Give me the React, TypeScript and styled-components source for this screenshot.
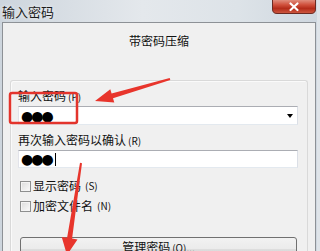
import React from "react";
import styled, { createGlobalStyle } from "styled-components";

const GlobalStyle = createGlobalStyle`
    html, body {
        margin: 0;
        padding: 0;
        background: #dfe4e9;
    }
    body {
        font-family: "Liberation Sans", "Noto Sans CJK SC", sans-serif;
        font-size: 12px;
        color: #000;
    }
`;

const Window = styled.div`
    position: relative;
    width: 317px;
    height: 251px;
    overflow: hidden;
    background: linear-gradient(90deg, #cdd5dd 0%, #e4e8ec 45%, #dde3e8 75%, #cfd7df 100%);
`;

const TitleBar = styled.div`
    height: 22px;
    display: flex;
    justify-content: space-between;
    align-items: flex-start;
`;

const Title = styled.div`
    margin: 4px 0 0 2px;
    font-family: "Noto Sans CJK SC", sans-serif;
    font-size: 13px;
    line-height: 15px;
    color: #1b1b1b;
    text-shadow: 0 0 4px rgba(255, 255, 255, 0.9);
`;

const CloseSvg = styled.svg`
    flex: 0 0 auto;
    display: block;
    margin-right: 1px;
`;

const CloseButton = () => (
    <CloseSvg width="44" height="14" viewBox="0 0 44 14">
        <defs>
            <linearGradient id="closeRed" x1="0" y1="0" x2="0" y2="1">
                <stop offset="0" stopColor="#e3998a" />
                <stop offset="0.4" stopColor="#d0503c" />
                <stop offset="0.65" stopColor="#b42c1a" />
                <stop offset="1" stopColor="#cf5a42" />
            </linearGradient>
        </defs>
        <path d="M0.5 -1 V9 Q0.5 13.5 5 13.5 H39 Q43.5 13.5 43.5 9 V-1 Z" fill="url(#closeRed)" stroke="#6b2a22" />
        <path d="M18.5 3.5 L25.5 10 M25.5 3.5 L18.5 10" stroke="#ffffff" strokeWidth="2.2" strokeLinecap="round" />
    </CloseSvg>
);

const Body = styled.div`
    margin: 0 1px 0 2px;
    height: 229px;
    border: 1px solid #8d9196;
    border-bottom: none;
    background: #f0f0f0;
    padding: 0 7px 0 7px;
`;

const Heading = styled.div`
    margin-top: 10px;
    height: 16px;
    text-align: center;
    font-family: "Noto Sans CJK SC", sans-serif;
    font-size: 12px;
    line-height: 16px;
    color: #111;
`;

const GroupBox = styled.div`
    margin-top: 31px;
    height: 200px;
    border: 1px solid #d9d9d9;
    border-bottom: none;
    border-radius: 3px 3px 0 0;
    box-shadow: inset 1px 1px 0 #fafafa;
    padding: 8px 9px 0 7px;
    display: flex;
    flex-direction: column;
`;

const FieldLabel = styled.div<{ $gap?: number }>`
    margin-top: ${({ $gap }) => $gap ?? 0}px;
    font-family: "Noto Sans CJK SC", sans-serif;
    font-size: 12px;
    line-height: 14px;
    color: #111;
`;

const Field = styled.div<{ $height: number }>`
    margin-top: 2px;
    height: ${({ $height }) => $height}px;
    box-sizing: border-box;
    background: #fff;
    border: 1px solid #abadb3;
    border-color: #abadb3 #dbdfe6 #e3e9ef #e2e3ea;
    display: flex;
    align-items: center;
    padding: 0 2px;
`;

const Dots = styled.span`
    font-family: "DejaVu Sans", sans-serif;
    font-size: 14px;
    letter-spacing: -2px;
    line-height: 14px;
    color: #000;
`;

const Caret = styled.span`
    display: inline-block;
    width: 1px;
    height: 13px;
    margin-left: 3px;
    background: #000;
`;

const DropArrow = styled.span`
    margin-left: auto;
    margin-right: 2px;
    width: 0;
    height: 0;
    border-left: 3.5px solid transparent;
    border-right: 3.5px solid transparent;
    border-top: 4px solid #000;
`;

const CheckRow = styled.label<{ $gap: number }>`
    margin: ${({ $gap }) => $gap}px 0 0 2px;
    display: flex;
    align-items: center;
    gap: 2px;
    font-family: "Noto Sans CJK SC", sans-serif;
    font-size: 12px;
    line-height: 12px;
    color: #111;
`;

const Box = styled.span`
    width: 11px;
    height: 11px;
    box-sizing: border-box;
    border: 1px solid #8e8f8f;
    background: linear-gradient(135deg, #dcdcdc, #fbfbfb);
    box-shadow: inset 0 0 0 1px #f4f4f4;
`;

const Hint = styled.span`
    font-size: 10px;
    margin-left: 2px;
`;

const Button = styled.div`
    margin: 25px 1px 0 2px;
    height: 24px;
    box-sizing: border-box;
    border: 1px solid #707070;
    border-radius: 3px;
    background: linear-gradient(#f2f2f2 0%, #ebebeb 48%, #dddddd 52%, #cfcfcf 100%);
    text-align: center;
    font-family: "Noto Sans CJK SC", sans-serif;
    font-size: 12px;
    line-height: 18px;
    color: #111;
`;

const Overlay = styled.svg`
    position: absolute;
    left: 0;
    top: 0;
    pointer-events: none;
`;

const Annotations = () => (
    <Overlay width="317" height="251" viewBox="0 0 317 251">
        <rect x="10" y="93" width="67" height="30" rx="2" fill="none" stroke="#e3342c" strokeWidth="2.5" />
        <polygon
            points="169.7,78 111.6,93.5 110.3,89.2 95,101 114.3,102.6 113,98.3 170.3,80"
            fill="#e8352c"
        />
        <polygon
            points="80,162.8 67.1,237.8 61.7,237 67,255 77.5,239.4 72.1,238.6 82,163.2"
            fill="#e8352c"
        />
    </Overlay>
);

const App: React.FC = () => {
    return (
        <>
            <GlobalStyle />
            <Window>
                <TitleBar>
                    <Title>输入密码</Title>
                    <CloseButton />
                </TitleBar>
                <Body>
                    <Heading>带密码压缩</Heading>
                    <GroupBox>
                        <FieldLabel>
                            输入密码<Hint>(P)</Hint>
                        </FieldLabel>
                        <Field $height={19}>
                            <Dots>●●●</Dots>
                            <DropArrow />
                        </Field>
                        <FieldLabel $gap={8}>
                            再次输入密码以确认<Hint>(R)</Hint>
                        </FieldLabel>
                        <Field $height={18}>
                            <Dots>●●●</Dots>
                            <Caret />
                        </Field>
                        <CheckRow $gap={12}>
                            <Box />
                            显示密码<Hint>(S)</Hint>
                        </CheckRow>
                        <CheckRow $gap={8}>
                            <Box />
                            加密文件名<Hint>(N)</Hint>
                        </CheckRow>
                        <Button>
                            管理密码<Hint>(O)...</Hint>
                        </Button>
                    </GroupBox>
                </Body>
                <Annotations />
            </Window>
        </>
    );
};

export default App;
